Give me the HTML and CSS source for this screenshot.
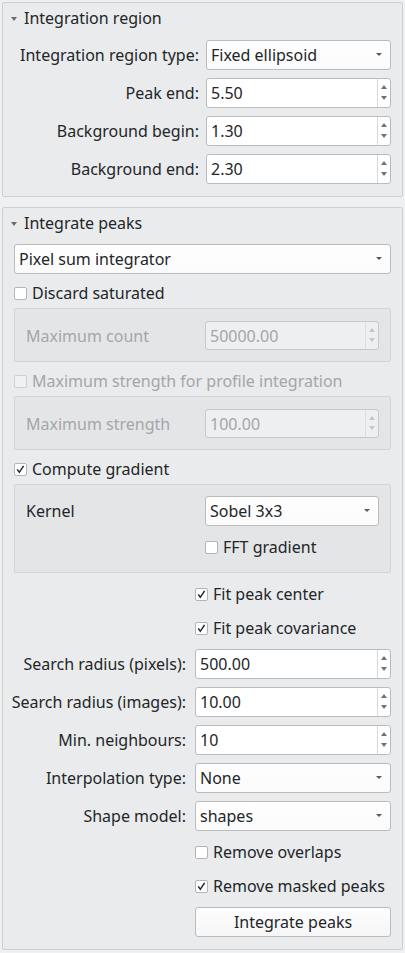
FILE: index.html
```html
<!DOCTYPE html>
<html>
<head>
<meta charset="utf-8">
<link rel="stylesheet" href="styles.css">
</head>
<body>
<section class="panel">
  <div class="ph"><i class="tri"></i><span>Integration region</span></div>
  <div class="pbody">
    <div class="form f1">
      <label>Integration region type:</label>
      <div class="combo"><span>Fixed ellipsoid</span><i class="arr"></i></div>
      <label>Peak end:</label>
      <div class="spin"><span class="val">5.50</span><span class="btns"><i class="up"></i><i class="dn"></i></span></div>
      <label>Background begin:</label>
      <div class="spin"><span class="val">1.30</span><span class="btns"><i class="up"></i><i class="dn"></i></span></div>
      <label>Background end:</label>
      <div class="spin"><span class="val">2.30</span><span class="btns"><i class="up"></i><i class="dn"></i></span></div>
    </div>
  </div>
</section>

<section class="panel p2">
  <div class="ph"><i class="tri"></i><span>Integrate peaks</span></div>
  <div class="pbody">
    <div class="combo top"><span>Pixel sum integrator</span><i class="arr"></i></div>

    <div class="chk row30 gap4"><span class="box"></span><span>Discard saturated</span></div>
    <div class="grp dis">
      <label>Maximum count</label>
      <div class="spin h29"><span class="val">50000.00</span><span class="btns"><i class="up"></i><i class="dn"></i></span></div>
    </div>

    <div class="chk row30 gap4 dis"><span class="box"></span><span>Maximum strength for profile integration</span></div>
    <div class="grp dis">
      <label>Maximum strength</label>
      <div class="spin h29"><span class="val">100.00</span><span class="btns"><i class="up"></i><i class="dn"></i></span></div>
    </div>

    <div class="chk row30 gap4"><span class="box on"><svg viewBox="0 0 11 11" width="11" height="11"><path d="M2.2 5.4 L4.3 8.3 L8.6 1.8" fill="none" stroke="#232629" stroke-width="1.5"/></svg></span><span>Compute gradient</span></div>
    <div class="grp g3">
      <label>Kernel</label>
      <div class="combo"><span>Sobel 3x3</span><i class="arr"></i></div>
      <div class="chk row26 c2"><span class="box"></span><span>FFT gradient</span></div>
    </div>

    <div class="form f2">
      <div class="chk row26 c2"><span class="box on"><svg viewBox="0 0 11 11" width="11" height="11"><path d="M2.2 5.4 L4.3 8.3 L8.6 1.8" fill="none" stroke="#232629" stroke-width="1.5"/></svg></span><span>Fit peak center</span></div>
      <div class="chk row26 c2"><span class="box on"><svg viewBox="0 0 11 11" width="11" height="11"><path d="M2.2 5.4 L4.3 8.3 L8.6 1.8" fill="none" stroke="#232629" stroke-width="1.5"/></svg></span><span>Fit peak covariance</span></div>
      <label>Search radius (pixels):</label>
      <div class="spin"><span class="val">500.00</span><span class="btns"><i class="up"></i><i class="dn"></i></span></div>
      <label>Search radius (images):</label>
      <div class="spin"><span class="val">10.00</span><span class="btns"><i class="up"></i><i class="dn"></i></span></div>
      <label>Min. neighbours:</label>
      <div class="spin"><span class="val">10</span><span class="btns"><i class="up"></i><i class="dn"></i></span></div>
      <label>Interpolation type:</label>
      <div class="combo"><span>None</span><i class="arr"></i></div>
      <label>Shape model:</label>
      <div class="combo"><span>shapes</span><i class="arr"></i></div>
      <div class="chk row26 c2"><span class="box"></span><span>Remove overlaps</span></div>
      <div class="chk row26 c2"><span class="box on"><svg viewBox="0 0 11 11" width="11" height="11"><path d="M2.2 5.4 L4.3 8.3 L8.6 1.8" fill="none" stroke="#232629" stroke-width="1.5"/></svg></span><span>Remove masked peaks</span></div>
      <button class="btn c2">Integrate peaks</button>
    </div>
  </div>
</section>
</body>
</html>
```

FILE: styles.css
```css
* { box-sizing: border-box; }

body {
  margin: 0;
  background: #eff0f1;
  font-family: "Noto Sans", "DejaVu Sans", sans-serif;
  font-size: 16px;
  color: #232629;
}

.panel {
  margin: 2px 2px 0;
  border: 1px solid #cdcfd1;
  border-radius: 2px;
  background: #eaebec;
  padding-bottom: 12px;
}

.panel.p2 { margin-top: 10px; }

.ph {
  height: 30px;
  display: flex;
  align-items: center;
  padding-left: 8px;
}

.tri {
  width: 0;
  height: 0;
  border-left: 3px solid transparent;
  border-right: 3px solid transparent;
  border-top: 4px solid #6a6d70;
  margin-right: 7px;
  margin-top: 1px;
}

.pbody { padding: 0 11px; }

.form { display: grid; align-items: center; }

.form label { justify-self: end; white-space: nowrap; }

.f1 {
  grid-template-columns: 1fr 185px;
  column-gap: 7px;
  row-gap: 8px;
  margin-top: 7px;
}

.f2 {
  grid-template-columns: 172px 1fr;
  column-gap: 9px;
  row-gap: 8px;
  margin-top: 8px;
}

.c2 { grid-column: 2; }

.combo {
  height: 30px;
  background: linear-gradient(#fefefe, #fbfbfb);
  border: 1px solid #babcbe;
  border-radius: 3px;
  display: flex;
  align-items: center;
  padding-left: 4px;
}

.combo.top { margin-top: 6px; }

.arr {
  margin-left: auto;
  margin-right: 8px;
  width: 0;
  height: 0;
  border-left: 3.5px solid transparent;
  border-right: 3.5px solid transparent;
  border-top: 3.5px solid #585b5e;
  margin-top: -1px;
}

.spin {
  height: 30px;
  background: #fff;
  border: 1px solid #babcbe;
  border-radius: 3px;
  display: flex;
}

.spin.h29 { height: 29px; }

.val {
  flex: 1;
  display: flex;
  align-items: center;
  padding-left: 4px;
}

.btns {
  width: 13px;
  border-left: 1px solid #d6d8da;
  display: flex;
  flex-direction: column;
  justify-content: space-between;
  align-items: center;
  padding: 6px 0 7px;
}

.up, .dn {
  width: 0;
  height: 0;
  border-left: 3.5px solid transparent;
  border-right: 3.5px solid transparent;
}

.up { border-bottom: 4px solid #6f7275; }
.dn { border-top: 4px solid #6f7275; }

.chk {
  display: flex;
  align-items: center;
  white-space: nowrap;
}

.row30 { height: 30px; }
.row26 { height: 26px; }
.gap4 { margin-top: 4px; }

.box {
  width: 13px;
  height: 13px;
  flex: none;
  border: 1px solid #b3b5b8;
  border-radius: 2px;
  background: #fff;
  margin-right: 5px;
  display: flex;
}

.grp {
  border: 1px solid #d2d4d6;
  border-radius: 2px;
  background: #e4e5e7;
  padding: 12px 11px 11px;
  display: grid;
  grid-template-columns: 1fr 174px;
  align-items: center;
}

.grp.g3 {
  padding: 11px 11px 12px;
  row-gap: 8px;
}

.dis { color: #a4a6a9; }

.dis .box { border-color: #cdcfd1; background: #f0f1f2; }

.grp.dis .spin {
  background: #eeeff0;
  border-color: #c6c8ca;
}

.grp.dis .btns { border-left-color: #dcdddf; }
.grp.dis .up { border-bottom-color: #c3c5c7; }
.grp.dis .dn { border-top-color: #c3c5c7; }

.btn {
  height: 30px;
  border: 1px solid #babcbe;
  border-radius: 3px;
  background: linear-gradient(#fdfdfd, #f6f6f7);
  font-family: inherit;
  font-size: 16px;
  color: #232629;
  padding: 0;
}
```
